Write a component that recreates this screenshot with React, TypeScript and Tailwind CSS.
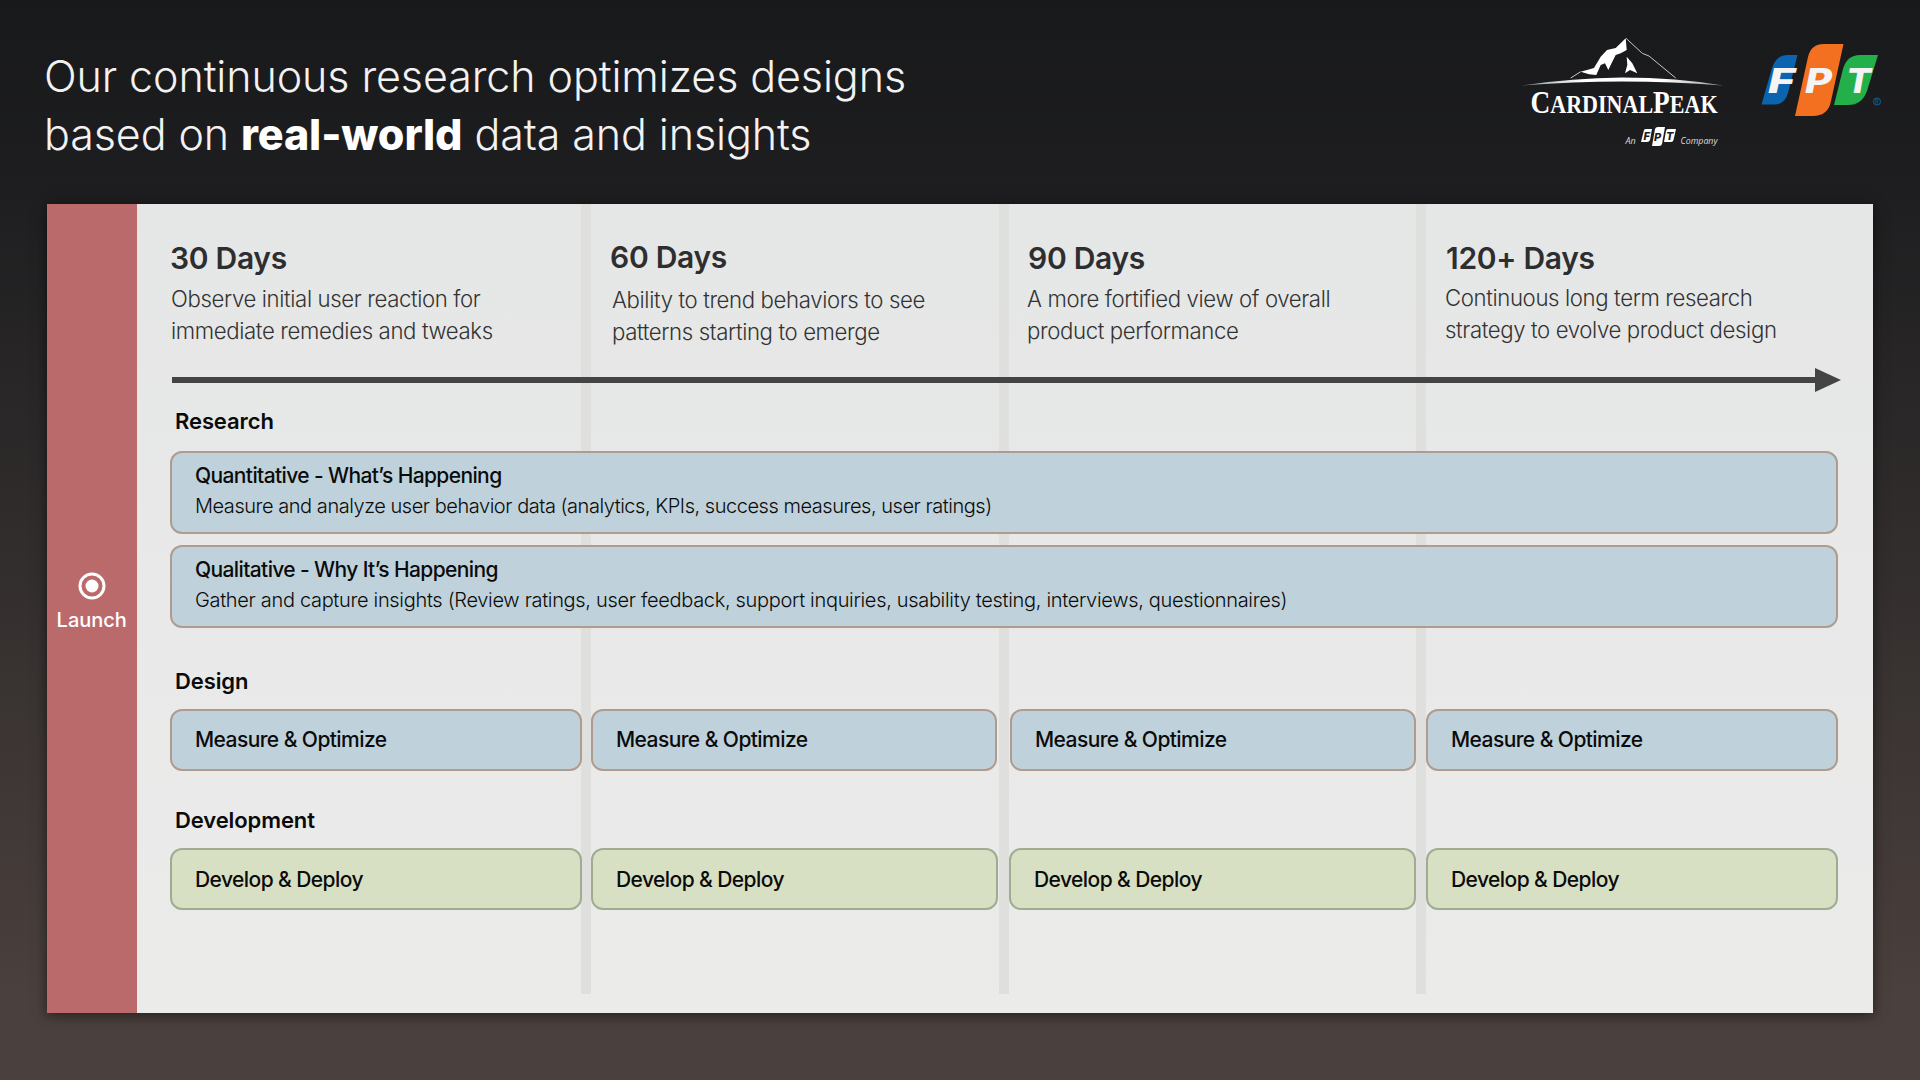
import React from "react";

const cols = [
  { h: "30 Days", a: "Observe initial user reaction for", b: "immediate remedies and tweaks", cls: "w-[439px]", head: "", body: "mt-[4px] pl-[1px]" },
  { h: "60 Days", a: "Ability to trend behaviors to see", b: "patterns starting to emerge", cls: "w-[417px] -mt-[1px]", head: "pl-[1px]", body: "mt-[6px] pl-[3px]" },
  { h: "90 Days", a: "A more fortified view of overall", b: "product performance", cls: "w-[417px]", head: "pl-[2px]", body: "mt-[4px] pl-[1px]" },
  { h: "120+ Days", a: "Continuous long term research", b: "strategy to evolve product design", cls: "w-[400px]", head: "pl-[3px]", body: "mt-[3px] pl-[2px]" },
];

const designBoxes = ["w-[412px] mr-[9px]", "w-[406px] mr-[13px]", "w-[406px] mr-[10px]", "w-[412px]"];
const devBoxes = ["w-[412px] mr-[9px]", "w-[407px] mr-[11px]", "w-[407px] mr-[10px]", "w-[412px]"];

function Mountain() {
  return (
    <svg width="210" height="118" viewBox="0 0 210 118" className="block">
      <defs>
        <linearGradient id="arc" x1="0" x2="1" y1="0" y2="0">
          <stop offset="0" stopColor="#fff" stopOpacity="0.55" />
          <stop offset="0.3" stopColor="#fff" />
          <stop offset="0.7" stopColor="#fff" />
          <stop offset="1" stopColor="#fff" stopOpacity="0.55" />
        </linearGradient>
      </defs>
      <path d="M0 47.5 Q50 40 100 39.5 Q155 39.5 201 47.5 Q150 43.5 100 43.5 Q50 43.5 0 47.5Z" fill="url(#arc)" />
      <path d="M48.7 40 L58.7 33.7 M104 0.3 L120.3 15.3 L127 18 L153.7 40" fill="none" stroke="#c8c8c8" strokeWidth="1" />
      <path d="M58.7 33.7 L72 30 L78.7 18.7 L85 12 L93.7 10 L103.7 0.3 L104.7 12 L98.7 15.3 L93.7 17 L90.3 23.7 L86.3 32 L83 25.3 L78.7 27 L74.3 37 L67 36.3 Z" fill="#fff" />
      <path d="M104.7 18.7 L110.3 25.3 L115.3 35.3 L108 32 L103 35.3 L105.3 27Z" fill="#fff" />
      <text transform="translate(8.5 74.5) scale(0.882 1)" fontFamily="'Liberation Serif', serif" fontWeight="700" fontSize="31" fill="#fff">
        C<tspan fontSize="25">ARDINAL</tspan>P<tspan fontSize="25">EAK</tspan>
      </text>
      <text x="103.5" y="105.5" fontFamily="'Open Sans', sans-serif" fontStyle="italic" fontSize="9" fill="#ddd">An</text>
      <g transform="translate(118 89)">
        <path d="M1 15 L4 3 Q4.5 2 6 2 L12 2 L10 13 Q9.5 15 7 15Z" fill="#fff" />
        <path d="M12 19 L15 2 Q15.5 0 18 0 L25 0 L22 17 Q21.5 19 19 19Z" fill="#fff" />
        <path d="M24 15 L26 4 Q26.5 2 28 2 L36 2 L33.5 13 Q33 15 31 15Z" fill="#fff" />
        <text x="3.5" y="13" fontFamily="Inter, sans-serif" fontStyle="italic" fontWeight="800" fontSize="11" fill="#1c1c1e">F</text>
        <text x="14" y="13.5" fontFamily="Inter, sans-serif" fontStyle="italic" fontWeight="800" fontSize="11" fill="#1c1c1e">P</text>
        <text x="26" y="13" fontFamily="Inter, sans-serif" fontStyle="italic" fontWeight="800" fontSize="11" fill="#1c1c1e">T</text>
      </g>
      <text x="158.5" y="105.5" fontFamily="'Open Sans', sans-serif" fontStyle="italic" fontSize="9.5" fill="#ddd" textLength="37" lengthAdjust="spacingAndGlyphs">Company</text>
    </svg>
  );
}

function FptLogo() {
  return (
    <svg width="125" height="80" viewBox="21 10 125 80" className="block">
      <path d="M21.5 73.5 L32 37 Q36 24 48 24 L57.5 24 L48 62 Q45 73.5 34 73.5 Z" fill="#0b64b0" />
      <path d="M55 85 L68 26 Q71 13 84 13 L103.5 13 L91 70 Q88 85 73 85 Z" fill="#f37021" />
      <path d="M94 74 L103 38 Q107 24 120 24 L138 24 L127 60 Q122 74 108 74 Z" fill="#23b04b" />
      <text x="28" y="62" fontFamily="Inter, sans-serif" fontStyle="italic" fontWeight="800" fontSize="34" fill="#f4f4f4" textLength="27" lengthAdjust="spacingAndGlyphs">F</text>
      <text x="65" y="62" fontFamily="Inter, sans-serif" fontStyle="italic" fontWeight="800" fontSize="34" fill="#f4f4f4" textLength="27" lengthAdjust="spacingAndGlyphs">P</text>
      <text x="106" y="62" fontFamily="Inter, sans-serif" fontStyle="italic" fontWeight="800" fontSize="34" fill="#f4f4f4" textLength="25" lengthAdjust="spacingAndGlyphs">T</text>
      <circle cx="137" cy="70.5" r="3.5" fill="none" stroke="#0b64b0" strokeWidth="0.9" />
      <text x="135.2" y="72.6" fontFamily="Inter, sans-serif" fontSize="5.5" fill="#0b64b0">R</text>
    </svg>
  );
}

function Box({ children, green, cls }: { children: React.ReactNode; green?: boolean; cls: string }) {
  return (
    <div
      className={
        "h-[62px] flex items-center pl-[23px] rounded-[12px] border-[2.5px] text-[21px] font-medium text-[#0b0b0b] tracking-[-0.57px] " +
        (green ? "bg-[#d8e0c3] border-[#a0ac92] pt-[1px] " : "bg-[#bfd2db] border-[#b09c8e] ") +
        cls
      }
    >
      {children}
    </div>
  );
}

function Wide({ title, text, cls }: { title: string; text: string; cls: string }) {
  return (
    <div className="h-[83px] flex flex-col justify-center pl-[23px] pb-[3px] rounded-[12px] border-[2.5px] bg-[#bfd2db] border-[#b09c8e] text-[#0b0b0b]">
      <div className="text-[21px] font-medium leading-[31px] tracking-[-0.62px]">{title}</div>
      <div className={"text-[20px] font-light leading-[31px] " + cls}>{text}</div>
    </div>
  );
}

function Label({ children, cls }: { children: React.ReactNode; cls: string }) {
  return <div className={"pl-[5px] text-[22px] font-semibold leading-[30px] text-[#0b0b0b] tracking-[-0.1px] " + cls}>{children}</div>;
}

export default function App() {
  return (
    <div className="w-[1920px] h-[1080px] overflow-hidden bg-[linear-gradient(180deg,#18191b_0%,#1e1e20_18%,#4a403d_92%,#4a403d_100%)] font-['Inter',sans-serif]">
      <header className="h-[204px] flex items-start justify-between">
        <h1 className="ml-[44px] mt-[48px] text-[43px] leading-[57.5px] font-light text-[#f2f2f2] tracking-[-0.1px]">
          Our continuous research optimizes designs
          <br />
          based on <b className="font-extrabold text-white">real-world</b> data and insights
        </h1>
        <div className="flex items-start mt-[38px]">
          <Mountain />
          <div className="ml-[29px] mt-[3px] mr-[34px]">
            <FptLogo />
          </div>
        </div>
      </header>

      <section className="ml-[46.5px] w-[1826.5px] h-[809px] flex shadow-[0_2px_12px_rgba(0,0,0,0.55)]">
        <aside className="w-[90.5px] bg-[#bb6a6b] flex flex-col items-center justify-center pb-[12px] text-white">
          <svg width="28" height="28" viewBox="0 0 28 28">
            <circle cx="14" cy="14" r="12" fill="none" stroke="#fff" strokeWidth="3" />
            <circle cx="14" cy="14" r="6.5" fill="#fff" />
          </svg>
          <div className="mt-[6px] text-[20px] font-medium leading-[28px]">Launch</div>
        </aside>

        <main className="relative flex-1 bg-[linear-gradient(180deg,#e5e7e6,#ebebea)] pl-[33px] pt-[33px]">
          <div className="absolute left-[444px] top-0 w-[10px] h-[790px] bg-[#dfdfde]" />
          <div className="absolute left-[862px] top-0 w-[10px] h-[790px] bg-[#dfdfde]" />
          <div className="absolute left-[1279px] top-0 w-[10px] h-[790px] bg-[#dfdfde]" />

          <div className="relative">
            <div className="flex h-[126px]">
              {cols.map((c) => (
                <div key={c.h} className={c.cls}>
                  <div className={"text-[30px] font-semibold leading-[42px] text-[#2e2e30] tracking-[-0.3px] " + c.head}>{c.h}</div>
                  <div className={"text-[22.2px] font-light leading-[32px] text-[#333] tracking-[-0.38px] " + c.body}>
                    {c.a}
                    <br />
                    {c.b}
                  </div>
                </div>
              ))}
            </div>

            <div className="flex items-center h-[24px] ml-[2px] mt-[5px] w-[1669px]">
              <div className="flex-1 h-[6px] bg-[#444]" />
              <svg width="26" height="24" viewBox="0 0 26 24" className="block">
                <path d="M0 0 L26 12 L0 24Z" fill="#444" />
              </svg>
            </div>

            <Label cls="mt-[13.5px]">Research</Label>
            <div className="w-[1668px] mt-[15.5px] flex flex-col gap-[11px]">
              <Wide cls="tracking-[-0.46px]" title="Quantitative - What’s Happening" text="Measure and analyze user behavior data (analytics, KPIs, success measures, user ratings)" />
              <Wide cls="tracking-[-0.32px]" title="Qualitative - Why It’s Happening" text="Gather and capture insights (Review ratings, user feedback, support inquiries, usability testing, interviews, questionnaires)" />
            </div>

            <Label cls="mt-[38px]">Design</Label>
            <div className="mt-[13px] flex">
              {designBoxes.map((c) => (
                <Box key={c} cls={c}>Measure &amp; Optimize</Box>
              ))}
            </div>

            <Label cls="mt-[34px]">Development</Label>
            <div className="mt-[13px] flex">
              {devBoxes.map((c) => (
                <Box key={c} green cls={c}>
                  Develop &amp; Deploy
                </Box>
              ))}
            </div>
          </div>
        </main>
      </section>
    </div>
  );
}
